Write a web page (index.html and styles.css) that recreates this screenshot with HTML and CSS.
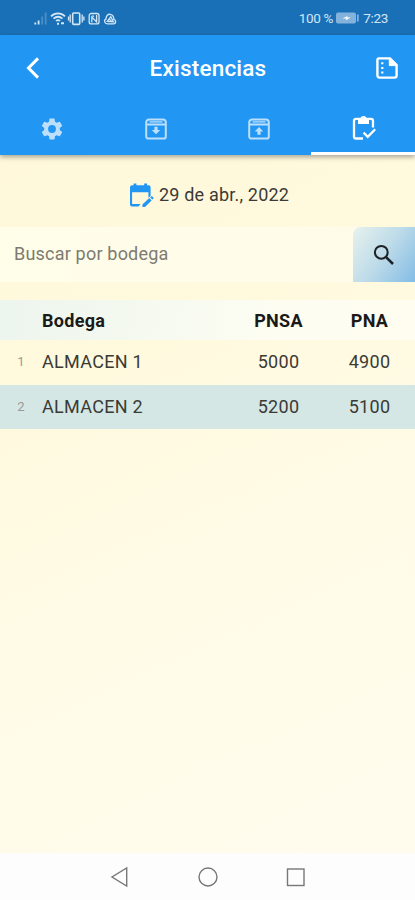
FILE: index.html
```
<!DOCTYPE html>
<html lang="es">
<head>
    <meta charset="UTF-8">
    <meta name="viewport" content="width=device-width, initial-scale=1.0">
    <title>Existencias</title>
    <link rel="stylesheet" href="styles.css">
</head>
<body>
    <div class="screen">
        <div class="status-bar">
            <div class="status-icons">
                <svg width="84" height="14" viewBox="0 0 84 14" fill="none" stroke="currentColor" stroke-width="1.3">
                    <!-- signal -->
                    <path d="M2.300 10.500v2M5.600 8.500v4" stroke-width="1.8"/>
                    <path d="M9.200 4.500v8M12.700 .5v12" stroke-width="1.8" opacity=".25"/>
                    <!-- wifi -->
                    <path d="M18 4.300c4-4 10-4 14 0M20.500 6.700c3-2.600 6-2.600 9 0M23 8.900c1.300-1 2.800-1 4 0" stroke-width="1.7"/>
                    <path d="M24 11.700h2M28 11.300h3" stroke-width="2"/>
                    <!-- vibrate -->
                    <rect x="39.700" y="1" width="7" height="11.400" rx="1" stroke-width="1.600"/>
                    <path d="M37.200 2.500v8M35.500 4.500v4M49.200 2.500v8M50.900 4.500v4"/>
                    <!-- nfc -->
                    <rect x="56.200" y="1.500" width="9.800" height="10.400" rx="2"/>
                    <path d="M58.800 10.500V5l4.800 5V3M59.500 3.500l1.300 1.300"/>
                    <!-- cloud -->
                    <path d="M74.500 11.900h6c2.800 0 2.800-4 .4-4.500C80.500 .7 73.500 .5 72.900 7.200c-2.300 1-1.500 4.700 1.600 4.700z"/>
                    <path d="M74.300 9.500l3.500-4.800 2.600 5zM76 6.900l3 2.800"/>
                </svg>
            </div>
            <div class="status-info">
                <span class="battery-text">100 %</span>
                <svg class="battery" width="23" height="12" viewBox="0 0 23 12">
                    <rect x="0" y="0.5" width="20" height="11" rx="2" fill="#83b2dd"/>
                    <path d="M21 2.5h1.7v7H21z" fill="#83b2dd"/>
                    <path d="M6.5 6.4l5-2.5-.3 1.6h3.6l-5 2.7.3-1.8z" fill="#fff"/>
                </svg>
                <span class="clock">7:23</span>
            </div>
        </div>

        <header class="app-bar">
            <div class="title-row">
                <svg class="back" width="24" height="24" viewBox="0 0 24 24">
                    <path d="M17 2.4L7.500 12l9.500 9.600" fill="none" stroke="currentColor" stroke-width="3"/>
                </svg>
                <h1>Existencias</h1>
                <svg class="report" width="22" height="22" viewBox="0 0 22 22" fill="none" stroke="currentColor">
                    <path d="M3 1.4h11L20.600 8v10.600a2 2 0 0 1-2 2H3.400a2 2 0 0 1-2-2V3.200c0-1 .6-1.800 1.600-1.800z" stroke-width="2.400"/>
                    <path d="M13.300 2v6.600H20z" fill="currentColor"/>
                    <path d="M5.200 6.300h2.200M5.200 11h2.200M5.200 15.600h2.200" stroke-width="2"/>
                </svg>
            </div>
            <nav class="tabs">
                <div class="tab">
                    <svg width="26" height="26" viewBox="0 0 24 24" fill="currentColor">
                        <path d="M19.14 12.94c.04-.3.06-.61.06-.94 0-.32-.02-.64-.07-.94l2.03-1.58c.18-.14.23-.41.12-.61l-1.92-3.32c-.12-.22-.37-.29-.59-.22l-2.39.96c-.5-.38-1.03-.7-1.62-.94l-.36-2.54c-.04-.24-.24-.41-.48-.41h-3.84c-.24 0-.43.17-.47.41l-.36 2.54c-.59.24-1.13.57-1.62.94l-2.39-.96c-.22-.08-.47 0-.59.22L2.74 8.87c-.12.21-.08.47.12.61l2.03 1.58c-.05.3-.09.63-.09.94s.02.64.07.94l-2.03 1.58c-.18.14-.23.41-.12.61l1.92 3.32c.12.22.37.29.59.22l2.39-.96c.5.38 1.03.7 1.62.94l.36 2.54c.05.24.24.41.48.41h3.84c.24 0 .44-.17.47-.41l.36-2.54c.59-.24 1.13-.56 1.62-.94l2.39.96c.22.08.47 0 .59-.22l1.92-3.32c.12-.22.07-.47-.12-.61l-2.01-1.58zM12 15.6A3.6 3.6 0 1 1 12 8.4a3.6 3.6 0 0 1 0 7.2z"/>
                    </svg>
                </div>
                <div class="tab">
                    <svg width="22" height="22" viewBox="0 0 22 22" fill="none" stroke="currentColor" stroke-width="2">
                        <path d="M1.200 4.400a3 3 0 0 1 3-3h13.600a3 3 0 0 1 3 3v14a2.200 2.200 0 0 1-2.200 2.200H3.400a2.200 2.200 0 0 1-2.200-2.200zM1.200 6.400h19.600"/>
                        <path d="M4.500 3.900h13" stroke-width="1.300"/>
                        <path d="M9.400 8.700h3.200V12h2.700L11 16.300 6.700 12h2.700z" fill="currentColor" stroke="none"/>
                    </svg>
                </div>
                <div class="tab">
                    <svg width="22" height="22" viewBox="0 0 22 22" fill="none" stroke="currentColor" stroke-width="2">
                        <path d="M1.200 4.400a3 3 0 0 1 3-3h13.600a3 3 0 0 1 3 3v14a2.200 2.200 0 0 1-2.200 2.200H3.400a2.200 2.200 0 0 1-2.200-2.200zM1.200 6.400h19.600"/>
                        <path d="M4.500 3.900h13" stroke-width="1.300"/>
                        <path d="M9.400 16.700h3.200v-3.300h2.700L11 9.100l-4.300 4.300h2.700z" fill="currentColor" stroke="none"/>
                    </svg>
                </div>
                <div class="tab active">
                    <svg width="24" height="26" viewBox="0 0 24 26" fill="none" stroke="currentColor" stroke-width="2.3">
                        <path d="M11 23.500H4a2 2 0 0 1-2-2V5.800a2 2 0 0 1 2-2h15a2 2 0 0 1 2 2v6.700"/>
                        <path d="M6 4v5h11V4h-2.500a3 3 0 0 0-6 0zm5.500-1.200a1.100 1.100 0 1 1 0 2.200 1.100 1.100 0 0 1 0-2.200z" fill="currentColor" fill-rule="evenodd" stroke="none"/>
                        <path d="M11.600 17.600l4.200 4.200 7.400-7.600"/>
                    </svg>
                </div>
            </nav>
        </header>

        <main class="content">
            <div class="date">
                <svg width="25" height="25" viewBox="0 0 25 25">
                    <path d="M3 2.200h1.600V.5h2.800v1.700h7.800V.5H18v1.700h1.600a2 2 0 0 1 2 2V13l-2.200 1.800V9.300H3.100v11.800h8.500l-2.200 2.300H3a2 2 0 0 1-2-2V4.200a2 2 0 0 1 2-2z" fill="currentColor"/>
                    <path d="M13.400 21.600l6.900-6.500 2.300 2.400-6.600 6.500h-2.600zM21.100 14.400l1-.9c.5-.4.9-.4 1.300 0l.9.900c.4.500.3.900 0 1.300l-.9.900z" fill="currentColor"/>
                </svg>
                <span>29 de abr., 2022</span>
            </div>

            <div class="search">
                <input type="text" placeholder="Buscar por bodega">
                <button aria-label="Buscar">
                    <svg width="22" height="22" viewBox="0 0 22 22" fill="none" stroke="currentColor">
                        <circle cx="8.300" cy="8.300" r="6.400" stroke-width="2"/>
                        <path d="M12.800 12.800l7.200 7.200" stroke-width="2.500"/>
                    </svg>
                </button>
            </div>

            <table class="stock">
                <thead>
                    <tr>
                        <th class="num"></th>
                        <th class="name">Bodega</th>
                        <th class="pnsa">PNSA</th>
                        <th class="pna">PNA</th>
                    </tr>
                </thead>
                <tbody>
                    <tr>
                        <td class="num">1</td>
                        <td class="name">ALMACEN 1</td>
                        <td>5000</td>
                        <td>4900</td>
                    </tr>
                    <tr>
                        <td class="num">2</td>
                        <td class="name">ALMACEN 2</td>
                        <td>5200</td>
                        <td>5100</td>
                    </tr>
                </tbody>
            </table>
        </main>

        <footer class="nav-bar">
            <svg width="20" height="22" viewBox="0 0 20 22"><path d="M16.700 2v18L2 11z"/></svg>
            <svg width="20" height="22" viewBox="0 0 20 22"><circle cx="10" cy="11" r="9"/></svg>
            <svg width="20" height="22" viewBox="0 0 20 22"><rect x="1.500" y="3" width="16.500" height="16.500"/></svg>
        </footer>
    </div>
</body>
</html>
```
FILE: styles.css
```
body {
    font-family: Roboto, sans-serif;
    margin: 0;
    padding: 0;
    color: #3a3a36;
}

.screen {
    display: flex;
    flex-direction: column;
    height: 900px;
    overflow: hidden;
    background: linear-gradient(155deg, #fff8d8 0%, #fff9de 38%, #fffbe6 60%, #fffcef 100%);
}

.status-bar {
    display: flex;
    justify-content: space-between;
    box-sizing: border-box;
    height: 35px;
    padding: 11px 27px 0 33px;
    background: #1a70b7;
    color: #d3e6f6;
}

.status-info {
    display: flex;
    height: 14px;
    align-items: center;
    font-size: 13.5px;
    line-height: 14px;
}

.battery-text {
    letter-spacing: -0.3px;
}

.battery {
    margin: 0 4px 0 3px;
}

.clock {
    letter-spacing: -0.3px;
}

.app-bar {
    position: relative;
    height: 120px;
    background: #2196f3;
    color: #fff;
    box-shadow: 0 2px 5px rgba(0, 0, 0, 0.35);
}

.title-row {
    display: flex;
    align-items: center;
    justify-content: space-between;
    height: 65px;
    padding: 0 17px 0 21px;
}

h1 {
    margin: 0 5px 0 0;
    font-size: 22.5px;
    font-weight: 500;
    letter-spacing: 0.2px;
}

.tabs {
    display: flex;
    height: 55px;
}

.tab {
    flex: 1;
    display: flex;
    align-items: center;
    justify-content: center;
    box-sizing: border-box;
    padding-top: 3px;
    color: #bcdffb;
    border-bottom: 3px solid transparent;
}

.tab svg {
    margin-top: 3px;
}

.tab.active {
    color: #fff;
    border-bottom-color: #fff;
}

.tab.active svg {
    margin-top: 0;
    margin-left: 2px;
}

.content {
    flex: 1;
}

.date {
    display: flex;
    align-items: center;
    justify-content: center;
    gap: 5px;
    height: 72px;
    padding-left: 3px;
    font-size: 18px;
    letter-spacing: 0.2px;
}

.date svg {
    color: #2196f3;
    margin-top: 8px;
}

.date span {
    margin-top: 6px;
}

.search {
    display: flex;
    height: 55px;
    background: linear-gradient(100deg, #fffee9, #fffbea);
}

.search input {
    flex: 1;
    min-width: 0;
    padding: 0 0 2px 14px;
    border: none;
    outline: none;
    background: none;
    font-family: Roboto, sans-serif;
    font-size: 18px;
    letter-spacing: 0.2px;
}

.search input::placeholder {
    color: #7d7b70;
}

.search button {
    display: flex;
    align-items: center;
    justify-content: center;
    width: 62px;
    padding: 0;
    border: none;
    border-top-left-radius: 8px;
    background: linear-gradient(125deg, #e7f2ed 0%, #bddbe9 50%, #83bce5 100%);
    color: #1c2226;
}

.stock {
    width: 100%;
    margin-top: 18px;
    border-collapse: collapse;
    table-layout: fixed;
    font-size: 18px;
    letter-spacing: 0.3px;
}

.stock th, .stock td {
    padding: 0;
    text-align: center;
}

.stock thead tr {
    height: 40px;
    background: linear-gradient(100deg, #ecf5ee, #fdfdf2 65%, #fffdf0);
}

.stock tbody tr {
    height: 44.5px;
}

.stock tbody td {
    padding-bottom: 1px;
}

.stock tbody tr:nth-child(even) {
    background: #d4e7e4;
}

.stock th {
    font-weight: 700;
    color: #1a1a1a;
}

.stock .num {
    width: 42px;
    font-size: 13px;
    color: #999;
}

.stock .name {
    text-align: left;
}

.stock .pnsa {
    width: 91px;
}

.stock .pna {
    width: 91px;
}

.nav-bar {
    display: flex;
    align-items: center;
    justify-content: center;
    gap: 68px;
    height: 47px;
    background: #fdfdfd;
}

.nav-bar svg {
    fill: none;
    stroke: #777;
    stroke-width: 1.4;
}
```
